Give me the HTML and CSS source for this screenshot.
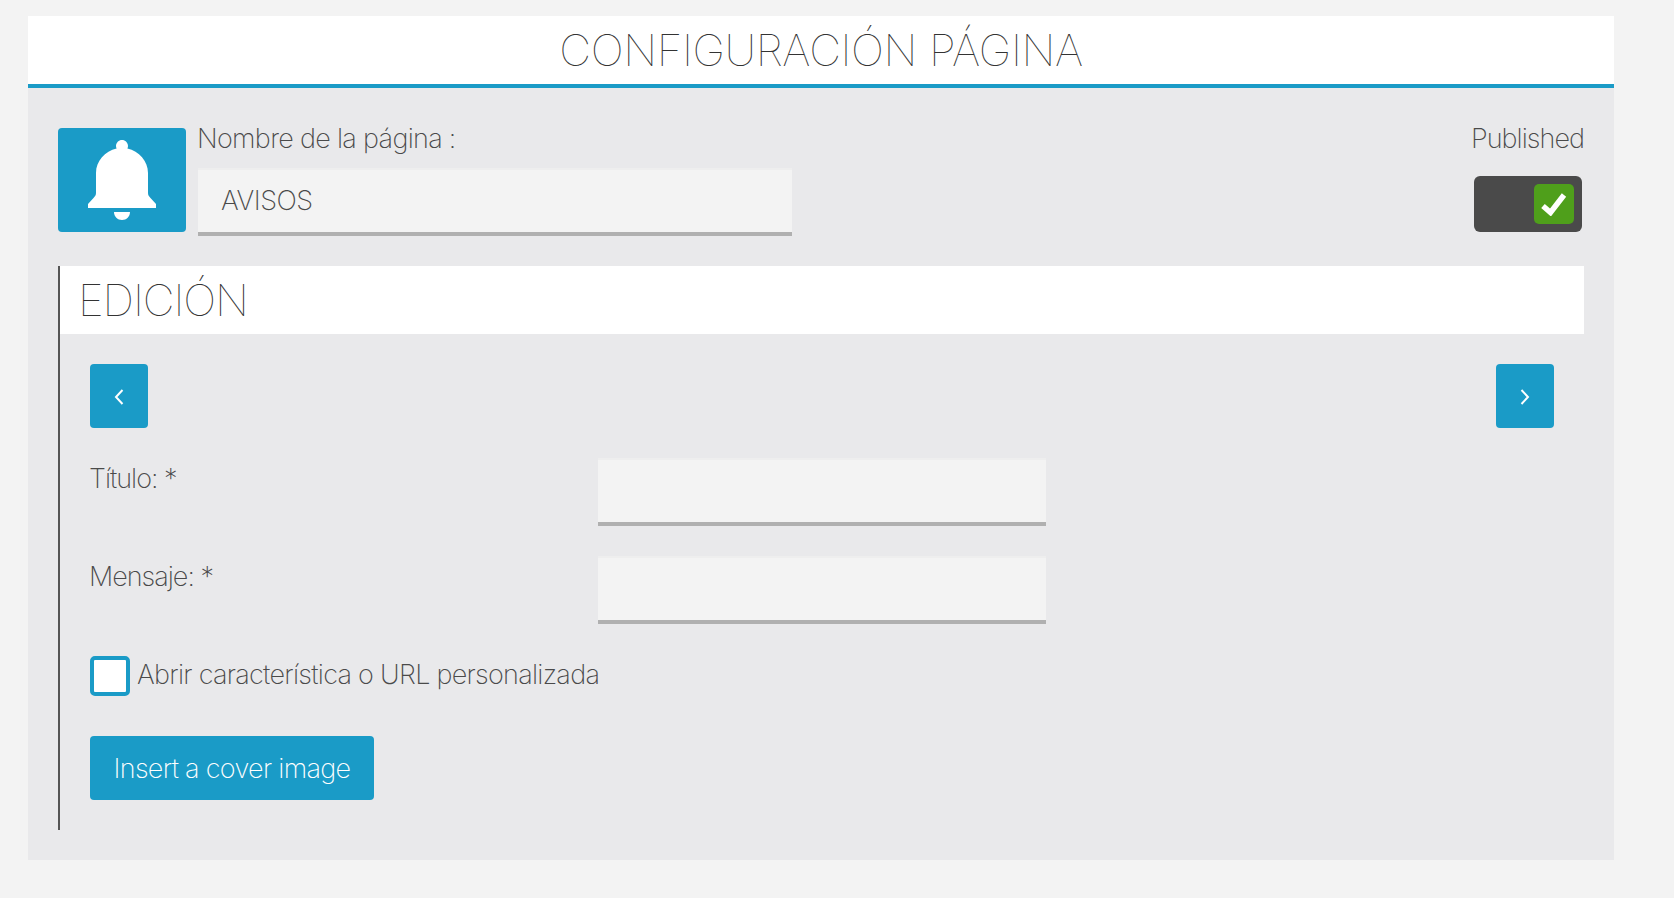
FILE: index.html
```html
<!DOCTYPE html>
<html lang="es">
<head>
    <meta charset="UTF-8">
    <title>Configuración página</title>
    <link rel="stylesheet" href="styles.css">
</head>
<body>
    <div class="panel">
        <h1 class="panel-title">CONFIGURACIÓN PÁGINA</h1>

        <div class="panel-body">
            <!-- Page name and publish switch -->
            <div class="page-row">
                <div class="page-icon">
                    <svg width="68" height="80" viewBox="0 0 68 80">
                        <path fill="#fff" d="M34 0c3.300 0 6 2.700 6 6 0 1-.2 1.700-.6 2.500C51 11 60 21 60 33v20c0 2 1 3.500 2.500 5l5.500 6v4H0v-4l5.500-6C7 56.500 8 55 8 53V33C8 21 17 11 28.600 8.500 28.200 7.700 28 7 28 6c0-3.300 2.700-6 6-6z"/>
                        <path fill="#fff" d="M26 72h16c0 4.500-3.500 8-8 8s-8-3.500-8-8z"/>
                    </svg>
                </div>
                <div class="page-name">
                    <label class="field-label" for="pageName">Nombre de la página :</label>
                    <input class="text-input name-input" id="pageName" type="text" value="AVISOS">
                </div>
                <div class="publish">
                    <div class="field-label">Published</div>
                    <div class="switch">
                        <span class="switch-knob">
                            <svg width="26" height="24" viewBox="0 0 26 24">
                                <path fill="none" stroke="#fff" stroke-width="5.500" d="M2 14l7.500 6.500L23 3"/>
                            </svg>
                        </span>
                    </div>
                </div>
            </div>

            <!-- Edit section -->
            <div class="section">
                <h2 class="section-title">EDICIÓN</h2>
                <div class="section-body">
                    <div class="nav-row">
                        <button class="btn btn-nav" type="button">
                            <svg width="12" height="18" viewBox="0 0 12 18"><path fill="none" stroke="#fff" stroke-width="2" d="M9.500 3L3 10l6.500 7"/></svg>
                        </button>
                        <button class="btn btn-nav" type="button">
                            <svg width="12" height="18" viewBox="0 0 12 18"><path fill="none" stroke="#fff" stroke-width="2" d="M2.500 3L9 10l-6.500 7"/></svg>
                        </button>
                    </div>
                    <div class="form-row">
                        <label class="field-label form-label" for="titulo">Título: *</label>
                        <input class="text-input form-input" id="titulo" type="text">
                    </div>
                    <div class="form-row">
                        <label class="field-label form-label" for="mensaje">Mensaje: *</label>
                        <input class="text-input form-input" id="mensaje" type="text">
                    </div>
                    <div class="check-row">
                        <span class="check-box"></span>
                        <span class="field-label check-label">Abrir característica o URL personalizada</span>
                    </div>
                    <button class="btn btn-cover" type="button">Insert a cover image</button>
                </div>
            </div>
        </div>
    </div>
</body>
</html>
```

FILE: styles.css
```css
body {
    font-family: Inter, "Liberation Sans", sans-serif;
    font-weight: 200;
    margin: 0;
    padding: 16px 0 0 28px;
    background-color: #f3f3f3;
    color: #4a4a4a;
}

.panel {
    width: 1586px;
    height: 844px;
    background-color: #e9e9eb;
}

.panel-title {
    margin: 0;
    height: 68px;
    line-height: 68px;
    background-color: #fff;
    border-bottom: 4px solid #1a9bc7;
    text-align: center;
    color: #333;
    font-size: 44px;
    font-weight: 100;
    letter-spacing: -0.43px;
}

.panel-body {
    padding: 40px 30px 0;
}

.page-row {
    display: flex;
    height: 108px;
}

.page-icon {
    width: 128px;
    height: 104px;
    background-color: #1a9bc7;
    border-radius: 4px;
    display: flex;
    align-items: center;
    justify-content: center;
    margin-right: 12px;
}

.field-label {
    font-size: 27px;
    line-height: 28px;
    letter-spacing: -0.7px;
}

.page-name {
    display: flex;
    flex-direction: column;
    width: 594px;
}

.page-name .field-label {
    height: 43px;
    margin: -3px 0 0 -1px;
}

.text-input {
    display: block;
    box-sizing: border-box;
    background-color: #f3f3f3;
    border: none;
    border-top: 2px solid #eeeeee;
    border-bottom: 4px solid #b0b0b0;
    padding: 0 23px 2px;
    font-family: inherit;
    font-weight: 200;
    color: #4a4a4a;
    font-size: 27px;
    letter-spacing: -0.45px;
    outline: none;
}

.name-input {
    width: 594px;
    height: 68px;
}

.publish {
    margin-left: auto;
    display: flex;
    flex-direction: column;
    align-items: flex-end;
}

.publish .field-label {
    height: 51px;
    margin-top: -3px;
    letter-spacing: -0.95px;
}

.switch {
    width: 108px;
    height: 56px;
    margin-right: 2px;
    box-sizing: border-box;
    padding: 8px;
    background-color: #4a4a4a;
    border-radius: 6px;
    display: flex;
    justify-content: flex-end;
}

.switch-knob {
    width: 40px;
    height: 40px;
    background-color: #4f9f1b;
    border-radius: 5px;
    display: flex;
    align-items: center;
    justify-content: center;
}

.section {
    margin-top: 30px;
    border-left: 2px solid #555;
    height: 564px;
}

.section-title {
    margin: 0;
    height: 68px;
    line-height: 68px;
    padding-left: 18px;
    background-color: #fff;
    color: #333;
    font-size: 44px;
    font-weight: 100;
    letter-spacing: -1.1px;
}

.section-body {
    padding: 30px 30px 0;
}

.nav-row {
    display: flex;
    justify-content: space-between;
}

.btn {
    background-color: #1a9bc7;
    border: none;
    border-radius: 4px;
    color: #fff;
    font-family: inherit;
    padding: 0;
}

.btn-nav {
    width: 58px;
    height: 64px;
    display: flex;
    align-items: center;
    justify-content: center;
}

.form-row {
    display: flex;
    margin-top: 30px;
}

.form-label {
    width: 508px;
    margin-left: -1px;
    padding: 7px 0 0;
    letter-spacing: -1px;
}

.form-input {
    width: 448px;
    height: 68px;
    margin-left: 1px;
}

.check-row {
    display: flex;
    align-items: center;
    margin-top: 32px;
}

.check-box {
    box-sizing: border-box;
    width: 40px;
    height: 40px;
    margin-right: 7px;
    background-color: #fff;
    border: 4px solid #1a9bc7;
    border-radius: 5px;
}

.check-label {
    padding-bottom: 2px;
    letter-spacing: -0.72px;
}

.btn-cover {
    display: block;
    width: 284px;
    height: 64px;
    margin-top: 40px;
    font-size: 27px;
    font-weight: 200;
    letter-spacing: -0.7px;
}
```
